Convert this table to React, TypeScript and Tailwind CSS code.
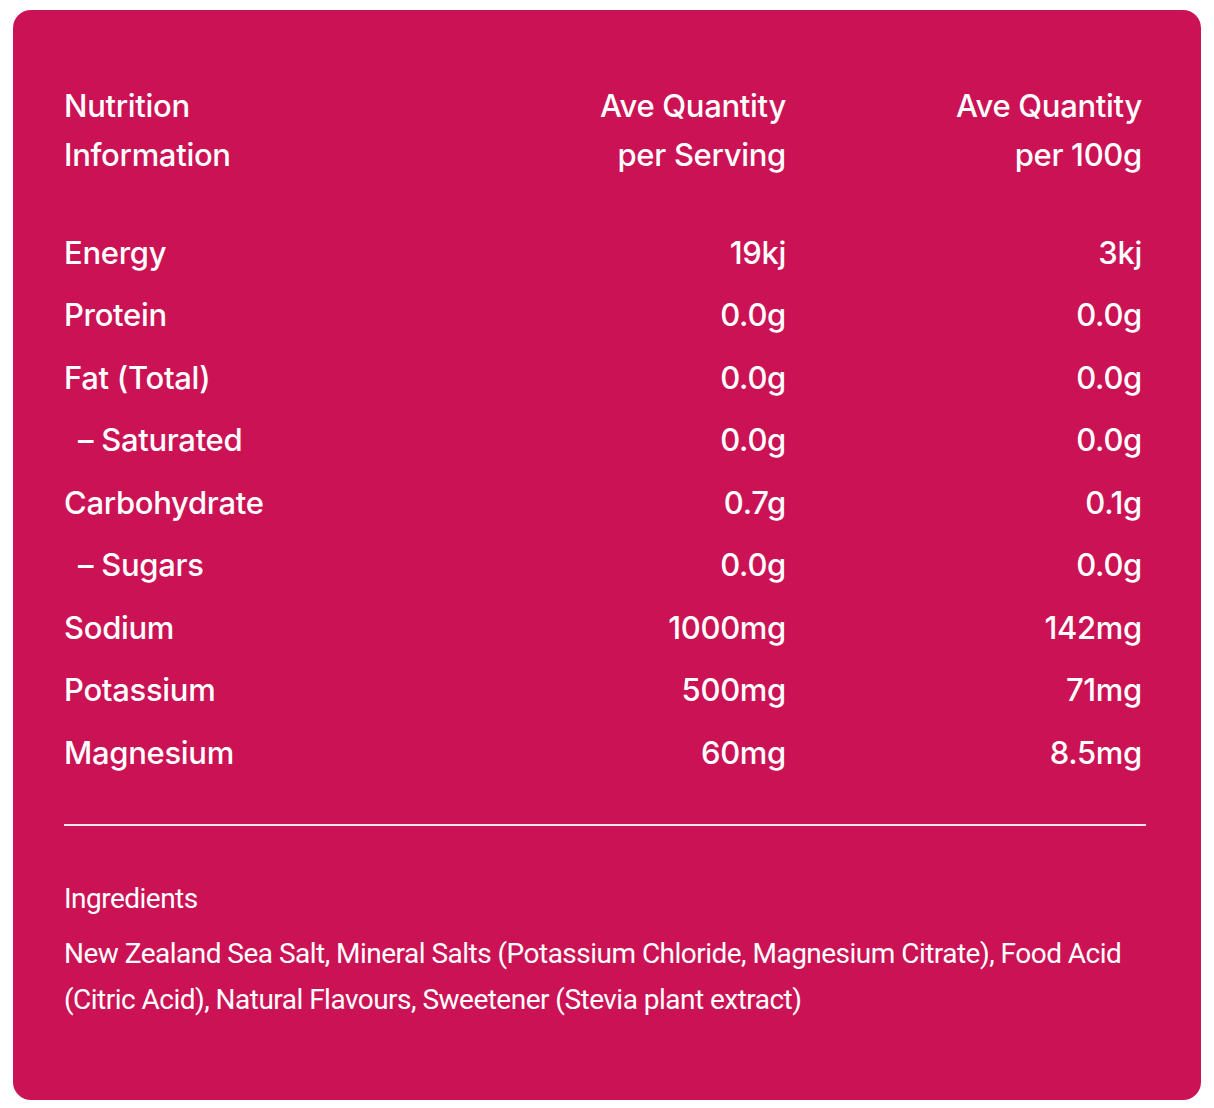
const rows: [string, string, string, boolean?][] = [
  ['Energy', '19kj', '3kj'],
  ['Protein', '0.0g', '0.0g'],
  ['Fat (Total)', '0.0g', '0.0g'],
  ['– Saturated', '0.0g', '0.0g', true],
  ['Carbohydrate', '0.7g', '0.1g'],
  ['– Sugars', '0.0g', '0.0g', true],
  ['Sodium', '1000mg', '142mg'],
  ['Potassium', '500mg', '71mg'],
  ['Magnesium', '60mg', '8.5mg'],
];

export default function App() {
  return (
    <div className="bg-white w-[1214px] h-[1108px] pt-[10px] pl-[13px]">
      <div className="w-[1188px] h-[1090px] rounded-[18px] bg-[#cb1255] text-white pl-[51px] pr-[55px] pt-[71px]">
        <div className="font-['Inter',sans-serif] font-medium text-[31px] leading-[49px] tracking-[-0.3px]">
          <div className="grid grid-cols-[1fr_360px_356px] pr-[4px]">
            <div>Nutrition<br />Information</div>
            <div className="text-right">Ave Quantity<br />per Serving</div>
            <div className="text-right">Ave Quantity<br />per 100g</div>
          </div>
          <div className="mt-[42px] pr-[4px]">
            {rows.map(([name, serving, per100, sub]) => (
              <div key={name} className="grid grid-cols-[1fr_360px_356px] h-[62.5px] items-center">
                <div className={sub ? 'pl-[14px]' : ''}>{name}</div>
                <div className="text-right">{serving}</div>
                <div className="text-right">{per100}</div>
              </div>
            ))}
          </div>
        </div>
        <div className="mt-[40px] h-[2px] bg-white/90" />
        <div className="mt-[55px] font-['Roboto',sans-serif] text-[28px] tracking-[-0.52px]">
          <div className="leading-[36px]">Ingredients</div>
          <p className="mt-[14px] leading-[46px]">
            New Zealand Sea Salt, Mineral Salts (Potassium Chloride, Magnesium Citrate), Food Acid (Citric Acid), Natural Flavours, Sweetener (Stevia plant extract)
          </p>
        </div>
      </div>
    </div>
  );
}
